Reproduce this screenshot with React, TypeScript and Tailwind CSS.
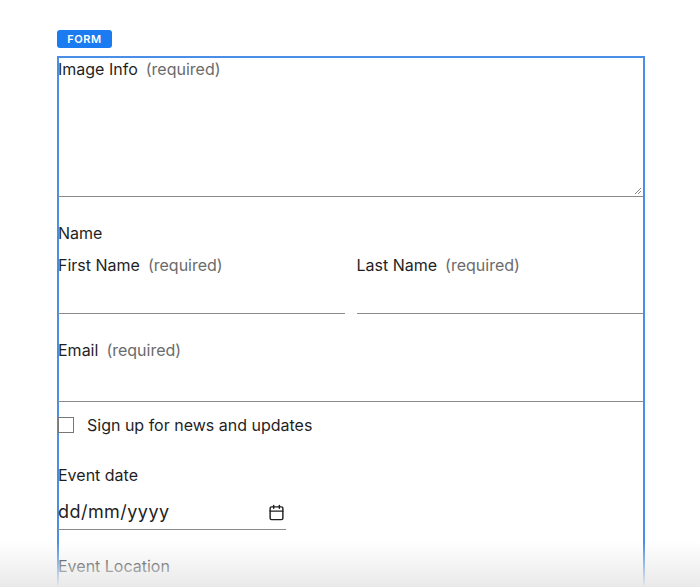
import { Calendar } from "lucide-react";

const Req = () => <span className="ml-2 text-[#6b6b6b]">(required)</span>;

export default function App() {
	return (
		<div
			className="relative h-[587px] w-[700px] overflow-hidden bg-white text-[16px] text-[#1f1f1f]"
			style={{ fontFamily: "Inter, 'Liberation Sans', sans-serif" }}
		>
			<div className="ml-[57px] pt-[30px]">
				<div className="flex h-[18px] w-[55px] items-center justify-center rounded-[3px] bg-[#1a7cf0] text-[11px] font-semibold tracking-wider text-white">
					FORM
				</div>
				<div className="mt-[8px] h-[600px] w-[588px] border-x-2 border-t-2 border-[#4a8ee8]">
					<div className="-ml-[1px]">
						<div className="relative h-[139px] border-b border-[#8a8a8a]">
							<div className="pt-[1px] leading-[20px]">
								Image Info
								<Req />
							</div>
							<svg className="absolute bottom-[1px] right-[1px]" width="8" height="8" viewBox="0 0 8 8">
								<path d="M7 1L1 7M7 4L4 7" stroke="#888" strokeWidth="1" />
							</svg>
						</div>
						<div className="mt-[26px] leading-[20px]">Name</div>
						<div className="mt-[12px] flex gap-[12px]">
							<div className="flex-1">
								<div className="leading-[20px]">
									First Name
									<Req />
								</div>
								<div className="mt-[38px] border-b border-[#8a8a8a]" />
							</div>
							<div className="flex-1">
								<div className="leading-[20px]">
									Last Name
									<Req />
								</div>
								<div className="mt-[38px] border-b border-[#8a8a8a]" />
							</div>
						</div>
						<div className="mt-[26px] leading-[20px]">
							Email
							<Req />
						</div>
						<div className="mt-[41px] border-b border-[#8a8a8a]" />
						<div className="mt-[13px] flex items-center gap-[13px]">
							<div className="h-[16px] w-[16px] border border-[#777]" />
							<span className="leading-[20px]">Sign up for news and updates</span>
						</div>
						<div className="mt-[30px] leading-[20px]">Event date</div>
						<div className="mt-[16px] flex w-[228px] items-center justify-between border-b border-[#8a8a8a] pb-[6px] pr-[1px]">
							<span className="text-[18px] leading-[22px] tracking-wide">dd/mm/yyyy</span>
							<Calendar size={17} strokeWidth={2} />
						</div>
						<div className="mt-[26px] leading-[20px]">Event Location</div>
					</div>
				</div>
			</div>
			<div className="pointer-events-none absolute bottom-0 left-0 h-[45px] w-full bg-gradient-to-b from-transparent to-[#e9e9e9]" />
		</div>
	);
}
